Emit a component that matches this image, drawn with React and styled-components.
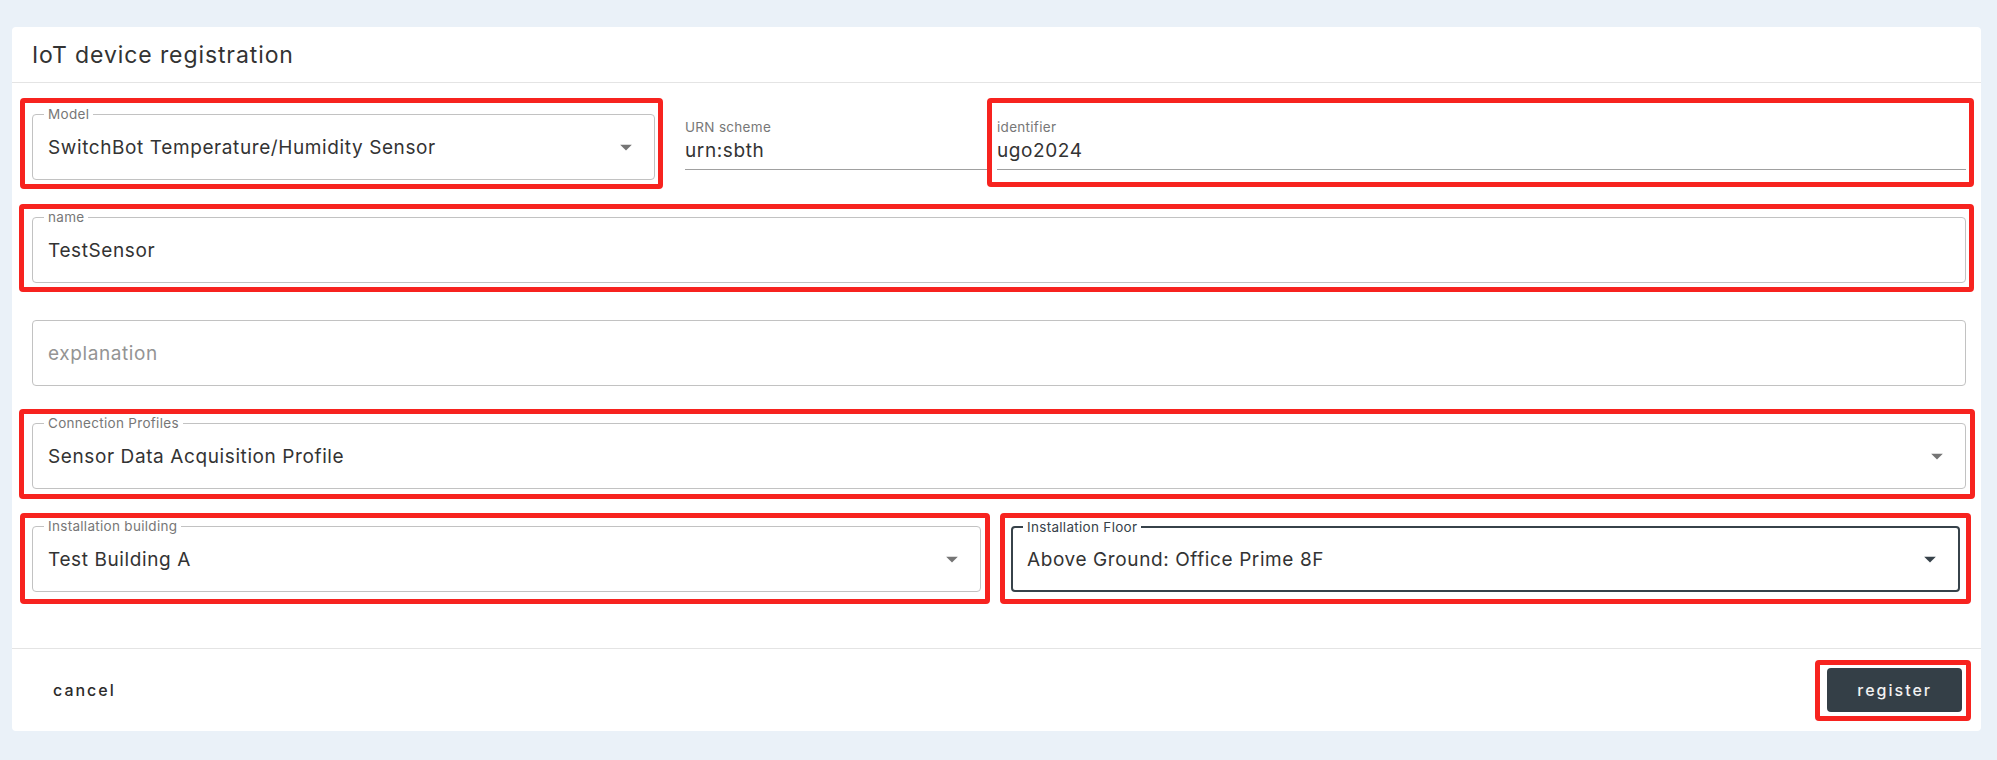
import React from 'react';
import styled, {createGlobalStyle} from 'styled-components';

const GlobalStyle = createGlobalStyle`
  html, body {
    margin: 0;
    padding: 0;
    background: #eaf1f8;
  }
  body {
    font-family: "Inter", "Noto Sans", sans-serif;
    color: #333;
  }
`;

const Page = styled.div`
  padding: 27px 16px 29px 12px;
  background: #eaf1f8;
`;

const Card = styled.div`
  background: #fff;
  border-radius: 4px;
`;

const Header = styled.div`
  height: 56px;
  display: flex;
  align-items: center;
  padding-left: 20px;
  border-bottom: 1px solid #e4e4e4;
  box-sizing: border-box;
`;

const Title = styled.h2`
  margin: 0;
  font-size: 23px;
  font-weight: 400;
  letter-spacing: 0.9px;
  color: #333;
`;

const Content = styled.div`
  padding: 31px 15px 56px 20px;
  display: flex;
  flex-direction: column;
  gap: 37px;
`;

const Row = styled.div`
  display: flex;
  align-items: flex-start;
`;

const SplitRow = styled.div`
  display: grid;
  grid-template-columns: 1fr 1fr;
  column-gap: 30px;
  padding-right: 6px;
`;

const Highlight = styled.div`
  position: relative;
  width: ${p => p.$width || 'auto'};
  flex: ${p => p.$flex || 'none'};
  margin-left: ${p => p.$offset || 0}px;

  &::after {
    content: "";
    position: absolute;
    inset: ${p => p.$inset};
    border: 5px solid #f7231f;
    border-radius: 4px;
    pointer-events: none;
  }
`;

const Outlined = styled.div`
  position: relative;
  height: 66px;
  box-sizing: border-box;
  border: ${p => (p.$focused ? '2px solid #37424a' : '1px solid #c2c2c2')};
  border-radius: 4px;
  display: flex;
  align-items: center;
  padding: 0 14px 0 ${p => (p.$focused ? 14 : 15)}px;
  background: #fff;
`;

const FloatLabel = styled.span`
  position: absolute;
  top: -8px;
  left: ${p => (p.$focused ? 10 : 11)}px;
  padding: 0 4px;
  background: #fff;
  font-size: 13.5px;
  line-height: 14px;
  letter-spacing: 0.3px;
  color: ${p => (p.$focused ? '#37424a' : '#777')};
`;

const Value = styled.span`
  flex: 1;
  font-size: 19px;
  letter-spacing: 0.6px;
  color: ${p => (p.$placeholder ? '#949494' : '#333')};
`;

const Arrow = styled.svg`
  width: 28px;
  height: 28px;
  fill: ${p => (p.$focused ? '#37424a' : '#757575')};
  flex: none;
`;

const Underlined = styled.div`
  display: flex;
  flex-direction: column;
  padding-top: 5px;
  padding-bottom: 4px;
  border-bottom: 1px solid #a0a0a0;
  width: ${p => p.$width || 'auto'};
  flex: ${p => p.$flex || 'none'};
  margin-left: ${p => p.$offset || 0}px;
`;

const SmallLabel = styled.span`
  font-size: 13.5px;
  line-height: 16px;
  letter-spacing: 0.3px;
  color: #777;
`;

const PlainValue = styled.span`
  margin-top: 2px;
  font-size: 19px;
  line-height: 28px;
  letter-spacing: 0.6px;
  color: #333;
`;

const Footer = styled.div`
  height: 83px;
  display: flex;
  align-items: center;
  justify-content: space-between;
  padding: 0 19px 0 20px;
  border-top: 1px solid #e4e4e4;
  box-sizing: border-box;
`;

const Button = styled.button`
  font-family: inherit;
  font-size: 16px;
  font-weight: 500;
  letter-spacing: 2px;
  border: none;
  border-radius: 4px;
  cursor: pointer;
  height: 44px;
  padding: 0 ${p => (p.$primary ? 30 : 21)}px;
  background: ${p => (p.$primary ? '#343f47' : 'transparent')};
  color: ${p => (p.$primary ? '#f2f2f2' : '#2b2b2b')};
`;

const DropArrow = ({focused}) => (
  <Arrow viewBox="0 0 24 24" $focused={focused}>
    <path d="M7 10l5 5 5-5z"/>
  </Arrow>
);

const SelectField = ({label, value, focused}) => (
  <Outlined $focused={focused}>
    <FloatLabel $focused={focused}>{label}</FloatLabel>
    <Value>{value}</Value>
    <DropArrow focused={focused}/>
  </Outlined>
);

const TextField = ({label, value, placeholder}) => (
  <Outlined>
    {label ? <FloatLabel>{label}</FloatLabel> : null}
    <Value $placeholder={!value}>{value || placeholder}</Value>
  </Outlined>
);

export default function App() {
  return (
    <Page>
      <GlobalStyle/>
      <Card>
        <Header>
          <Title>IoT device registration</Title>
        </Header>
        <Content>
          <Row>
            <Highlight $width="623px" $inset="-16px -8px -9px -12px">
              <SelectField label="Model" value="SwitchBot Temperature/Humidity Sensor"/>
            </Highlight>
            <Underlined $width="305px" $offset={30}>
              <SmallLabel>URN scheme</SmallLabel>
              <PlainValue>urn:sbth</PlainValue>
            </Underlined>
            <Highlight $flex="1" $offset={7} $inset="-16px -8px -17px -10px">
              <Underlined>
                <SmallLabel>identifier</SmallLabel>
                <PlainValue>ugo2024</PlainValue>
              </Underlined>
            </Highlight>
          </Row>
          <Highlight $inset="-13px -8px -9px -13px">
            <TextField label="name" value="TestSensor"/>
          </Highlight>
          <TextField placeholder="explanation"/>
          <Highlight $inset="-14px -9px -10px -13px">
            <SelectField label="Connection Profiles" value="Sensor Data Acquisition Profile"/>
          </Highlight>
          <SplitRow>
            <Highlight $inset="-13px -9px -12px -12px">
              <SelectField label="Installation building" value="Test Building A"/>
            </Highlight>
            <Highlight $inset="-13px -11px -12px -11px">
              <SelectField label="Installation Floor" value="Above Ground: Office Prime 8F" focused/>
            </Highlight>
          </SplitRow>
        </Content>
        <Footer>
          <Button>cancel</Button>
          <Highlight $inset="-8px -9px -9px -12px">
            <Button $primary>register</Button>
          </Highlight>
        </Footer>
      </Card>
    </Page>
  );
}
